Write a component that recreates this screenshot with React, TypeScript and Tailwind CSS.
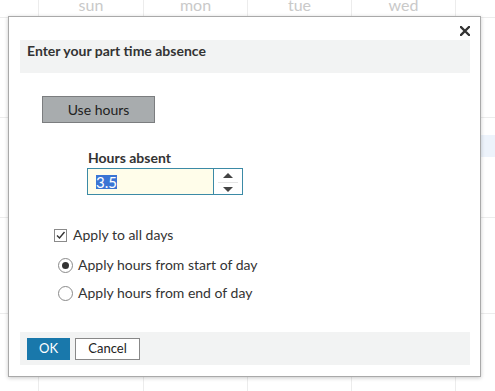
import React from "react";

const DAYS = ["", "sun", "mon", "tue", "wed", ""];

function CalendarBackdrop() {
  const cols = [0, 1, 2, 3, 4, 5];
  const rows = ["h-[100px]", "h-[100px]", "h-[96px]", "h-[100px]"];
  return (
    <div className="w-[495px] h-[391px] overflow-hidden bg-white">
      <div className="grid grid-cols-[38px_105px_104px_104px_104px_1fr] h-[18px] border-b border-[#ececec]">
        {DAYS.map((d, i) => (
          <div
            key={i}
            className={`${i > 0 ? "border-l border-[#ececec]" : ""} flex justify-center items-start`}
          >
            <span className="text-[16px] leading-none -mt-[3px] text-[#c9c9c9]">{d}</span>
          </div>
        ))}
      </div>
      {rows.map((h, r) => (
        <div
          key={r}
          className={`grid grid-cols-[38px_105px_104px_104px_104px_1fr] ${h} border-b border-[#ececec]`}
        >
          {cols.map((c) => (
            <div key={c} className={`${c > 0 ? "border-l border-[#ececec]" : ""} relative`}>
              {/* faint event block, mostly hidden under the dialog */}
              {r === 1 && c === 5 && (
                <div className="mt-[17px] h-[22px] bg-[#edf3fb]" />
              )}
            </div>
          ))}
        </div>
      ))}
    </div>
  );
}

function Spinner() {
  return (
    <div className="w-[29px] border-l border-[#3b8aa6] bg-white flex flex-col items-center justify-center">
      <svg width="10" height="5" viewBox="0 0 10 5" className="mt-[1px]">
        <path d="M0 5 L5 0 L10 5 Z" fill="#444" />
      </svg>
      <div className="w-[20px] h-px bg-[#e4e4e4] my-[4px]" />
      <svg width="10" height="5" viewBox="0 0 10 5">
        <path d="M0 0 L10 0 L5 5 Z" fill="#444" />
      </svg>
    </div>
  );
}

function Radio({ checked }: { checked?: boolean }) {
  return (
    <span className="w-[15px] h-[15px] rounded-full border border-[#8a8a8a] bg-white flex items-center justify-center shrink-0">
      {checked && <span className="w-[7px] h-[7px] rounded-full bg-[#333]" />}
    </span>
  );
}

export default function App() {
  return (
    <div className="relative w-[495px] h-[391px] font-['Lato',sans-serif] text-[#333]">
      <CalendarBackdrop />

      <div className="absolute left-[8px] top-[16px] w-[473px] h-[361px] bg-white border border-[#a9a9a9] shadow-[0_1px_4px_rgba(0,0,0,0.22)] flex flex-col pl-[11px] pr-[10px] pb-[11px]">
        <div className="h-[23px] flex justify-end items-center pt-[5px]">
          <button className="w-[10px] h-[10px] flex items-center justify-center" aria-label="Close">
            <svg width="10" height="10" viewBox="0 0 10 10">
              <path d="M1 1 L9 9 M9 1 L1 9" stroke="#333" strokeWidth="2.3" strokeLinecap="square" />
            </svg>
          </button>
        </div>

        <div className="h-[33px] bg-[#f2f3f3] pl-[7px] pt-[1px]">
          <h2 className="text-[14px] leading-[20px] font-bold text-[#333]">Enter your part time absence</h2>
        </div>

        <div className="mt-[23px] ml-[22px]">
          <button className="w-[113px] h-[27px] bg-[#a8acae] border border-[#7b7d7f] text-[14px] text-[#222] flex items-center justify-center">
            Use hours
          </button>
        </div>

        <div className="mt-[25px] ml-[67px]">
          <label className="block pl-[1px] text-[14px] leading-[20px] font-bold text-[#333]">Hours absent</label>
          <div className="w-[156px] h-[27px] border border-[#3b8aa6] flex">
            <div className="flex-1 bg-[#fffdea] flex items-center pl-[8px] pt-[1px]">
              <span className="inline-block h-[14px] leading-[14px] text-[15px] bg-[#3a75d4] text-white">3.5</span>
            </div>
            <Spinner />
          </div>
        </div>

        <div className="mt-[30px] ml-[34px] h-[20px] flex items-center gap-[6px]">
          <span className="w-[13px] h-[13px] border border-[#8a8a8a] bg-white flex items-center justify-center">
            <svg width="11" height="11" viewBox="0 0 11 11">
              <path d="M2 5.5 L4.5 8 L9.5 2" fill="none" stroke="#333" strokeWidth="1.4" />
            </svg>
          </span>
          <span className="text-[14px] leading-[20px]">Apply to all days</span>
        </div>

        <div className="mt-[10px] ml-[38px] h-[20px] flex items-center gap-[5px]">
          <Radio checked />
          <span className="text-[14px] leading-[20px]">Apply hours from start of day</span>
        </div>

        <div className="mt-[8px] ml-[38px] h-[20px] flex items-center gap-[5px]">
          <Radio />
          <span className="text-[14px] leading-[20px]">Apply hours from end of day</span>
        </div>

        <div className="mt-auto h-[33px] bg-[#f2f3f3] flex items-start gap-[5px] pl-[7px] pt-[6px]">
          <button className="w-[43px] h-[22px] bg-[#1978ab] text-white text-[13px] flex items-center justify-center">
            OK
          </button>
          <button className="w-[65px] h-[22px] bg-white border border-[#888] text-[13px] text-[#222] flex items-center justify-center">
            Cancel
          </button>
        </div>
      </div>
    </div>
  );
}
